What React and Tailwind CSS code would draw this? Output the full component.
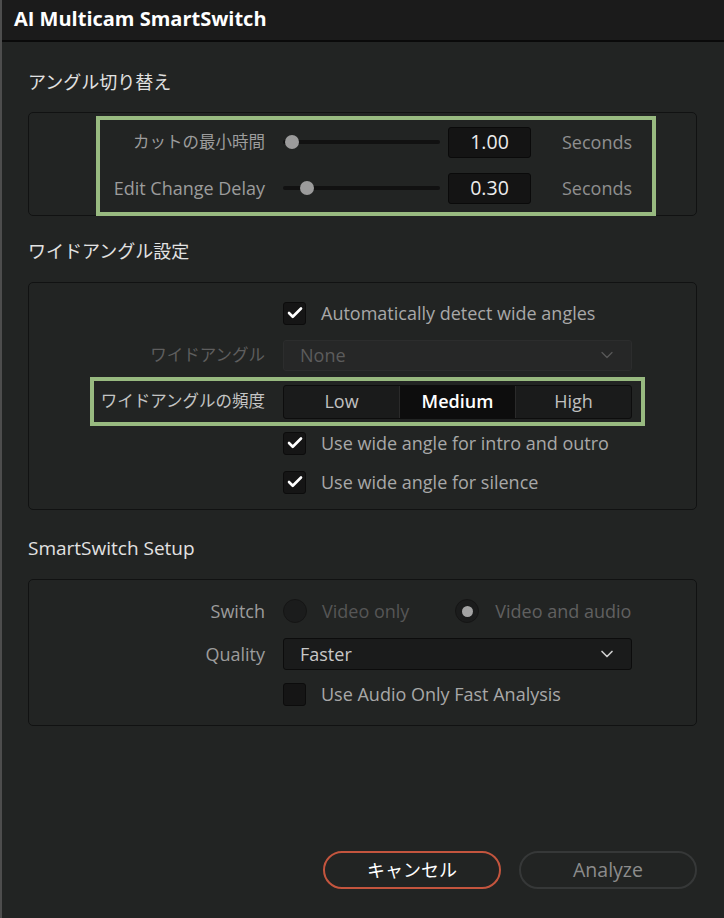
import { Check, ChevronDown } from "lucide-react";

const font = { fontFamily: '"Open Sans", "Noto Sans CJK JP", sans-serif' };

function Checkbox({ checked }) {
  return (
    <div className="w-[23px] h-[23px] rounded-[3px] bg-[#151515] border border-[#0c0c0c] flex items-center justify-center">
      {checked && <Check size={18} strokeWidth={3.5} className="text-white" />}
    </div>
  );
}

function SliderRow({ label, value, thumb, jp, h }) {
  return (
    <div className={`flex items-center ${h}`}>
      <div className={`w-[165px] text-right text-[#9c9c9c] ${jp ? "text-[16.5px]" : "text-[18px]"}`}>{label}</div>
      <div className="ml-[18px] w-[157px] relative h-[14px] flex items-center">
        <div className="w-full h-[4px] rounded-full bg-[#111111]" />
        <div className={`absolute top-0 w-[14px] h-[14px] rounded-full bg-[#9b9b9b] ${thumb}`} />
      </div>
      <div className="ml-[8px] w-[83px] h-[31px] rounded-[3px] bg-[#141414] border border-[#0a0a0a] flex items-center justify-center text-[19.5px] text-[#ececec]">
        {value}
      </div>
      <div className="ml-[31px] text-[18px] text-[#8f8f8f]">Seconds</div>
    </div>
  );
}

function CheckRow({ checked, label, className = "" }) {
  return (
    <div className={`flex items-center h-[34px] pl-[254px] ${className}`}>
      <Checkbox checked={checked} />
      <span className="ml-[15px] text-[18px] text-[#a8a8a8]">{label}</span>
    </div>
  );
}

function Radio({ selected }) {
  return (
    <div className="w-[24px] h-[24px] rounded-full bg-[#1b1c1c] border border-[#151515] flex items-center justify-center">
      {selected && <div className="w-[11px] h-[11px] rounded-full bg-[#a4a4a4]" />}
    </div>
  );
}

export default function App() {
  return (
    <div style={font} className="w-[724px] h-[918px] bg-[#222423] border-l-2 border-[#4d4d4d] flex flex-col overflow-hidden">
      {/* Title bar */}
      <div className="h-[42px] shrink-0 bg-[#1b1b1b] border-b-2 border-[#0a0a0a] flex items-center pl-[12px] pb-[3px]">
        <span className="text-[20px] font-bold text-white">AI Multicam SmartSwitch</span>
      </div>

      <div className="pl-[26px] pr-[27px]">
        {/* Angle switching */}
        <div className="pt-[28px] h-[70px] text-[18px] text-[#e2e2e2] leading-[24px]">アングル切り替え</div>
        <div className="h-[104px] rounded-[5px] border border-[#111212] pt-[3px]">
          <div className="ml-[67px] w-[560px] border-4 border-[#98ba80]">
            <SliderRow jp label="カットの最小時間" value="1.00" thumb="left-[2px]" h="h-[44px]" />
            <SliderRow label="Edit Change Delay" value="0.30" thumb="left-[17px]" h="h-[48px]" />
          </div>
        </div>

        {/* Wide angle */}
        <div className="pt-[23px] h-[66px] text-[18px] text-[#e2e2e2] leading-[24px]">ワイドアングル設定</div>
        <div className="h-[228px] rounded-[5px] border border-[#111212] pt-[13px]">
          <CheckRow checked label="Automatically detect wide angles" />
          <div className="mt-[8px] h-[34px] flex items-center">
            <div className="w-[236px] text-right text-[16.5px] text-[#5e5e5e]">ワイドアングル</div>
            <div className="ml-[18px] w-[349px] h-[31px] rounded-[3px] bg-[#262727] border border-[#2c2d2d] flex items-center justify-between pl-[16px] pr-[14px]">
              <span className="text-[18px] text-[#5c5c5c]">None</span>
              <ChevronDown size={20} strokeWidth={1.5} className="text-[#585858]" />
            </div>
          </div>
          <div className="mt-[5px] ml-[61px] w-[555px] h-[49px] border-4 border-[#98ba80] flex items-center">
            <div className="w-[171px] text-right text-[16.5px] text-[#c4c4c4]">ワイドアングルの頻度</div>
            <div className="ml-[18px] w-[349px] h-[34px] rounded-[3px] bg-[#1a1b1b] border border-[#0d0d0d] flex overflow-hidden">
              <div className="flex-1 flex items-center justify-center text-[18px] text-[#c0c0c0] border-r border-[#2a2a2a]">Low</div>
              <div className="flex-1 flex items-center justify-center text-[18px] font-semibold text-white bg-[#0d0d0d]">Medium</div>
              <div className="flex-1 flex items-center justify-center text-[18px] text-[#c0c0c0] border-l border-[#2a2a2a]">High</div>
            </div>
          </div>
          <CheckRow checked label="Use wide angle for intro and outro" />
          <CheckRow checked label="Use wide angle for silence" className="mt-[5px]" />
        </div>

        {/* SmartSwitch Setup */}
        <div className="pt-[26px] h-[69px] text-[19px] text-[#e2e2e2] leading-[24px]">SmartSwitch Setup</div>
        <div className="h-[147px] rounded-[5px] border border-[#111212] pt-[14px]">
          <div className="h-[34px] flex items-center">
            <div className="w-[236px] text-right text-[18px] text-[#9c9c9c]">Switch</div>
            <div className="ml-[18px]"><Radio /></div>
            <span className="ml-[15px] text-[18px] text-[#565656]">Video only</span>
            <div className="ml-[46px]"><Radio selected /></div>
            <span className="ml-[16px] text-[18px] text-[#606060]">Video and audio</span>
          </div>
          <div className="mt-[9px] h-[34px] flex items-center">
            <div className="w-[236px] text-right text-[18px] text-[#9c9c9c]">Quality</div>
            <div className="ml-[18px] w-[349px] h-[32px] rounded-[3px] bg-[#1a1b1b] border border-[#0c0c0c] flex items-center justify-between pl-[16px] pr-[14px]">
              <span className="text-[18px] text-[#c8c8c8]">Faster</span>
              <ChevronDown size={20} strokeWidth={2} className="text-[#cfcfcf]" />
            </div>
          </div>
          <CheckRow label="Use Audio Only Fast Analysis" className="mt-[6px]" />
        </div>
      </div>

      {/* Footer buttons */}
      <div className="mt-auto flex justify-end gap-[18px] pr-[27px] pb-[29px]">
        <button className="w-[178px] h-[38px] rounded-full border-2 border-[#c4553e] text-[18px] text-white flex items-center justify-center">
          キャンセル
        </button>
        <button className="w-[178px] h-[38px] rounded-full border-2 border-[#363838] text-[19.5px] text-[#8c8c8c] flex items-center justify-center">
          Analyze
        </button>
      </div>
    </div>
  );
}
